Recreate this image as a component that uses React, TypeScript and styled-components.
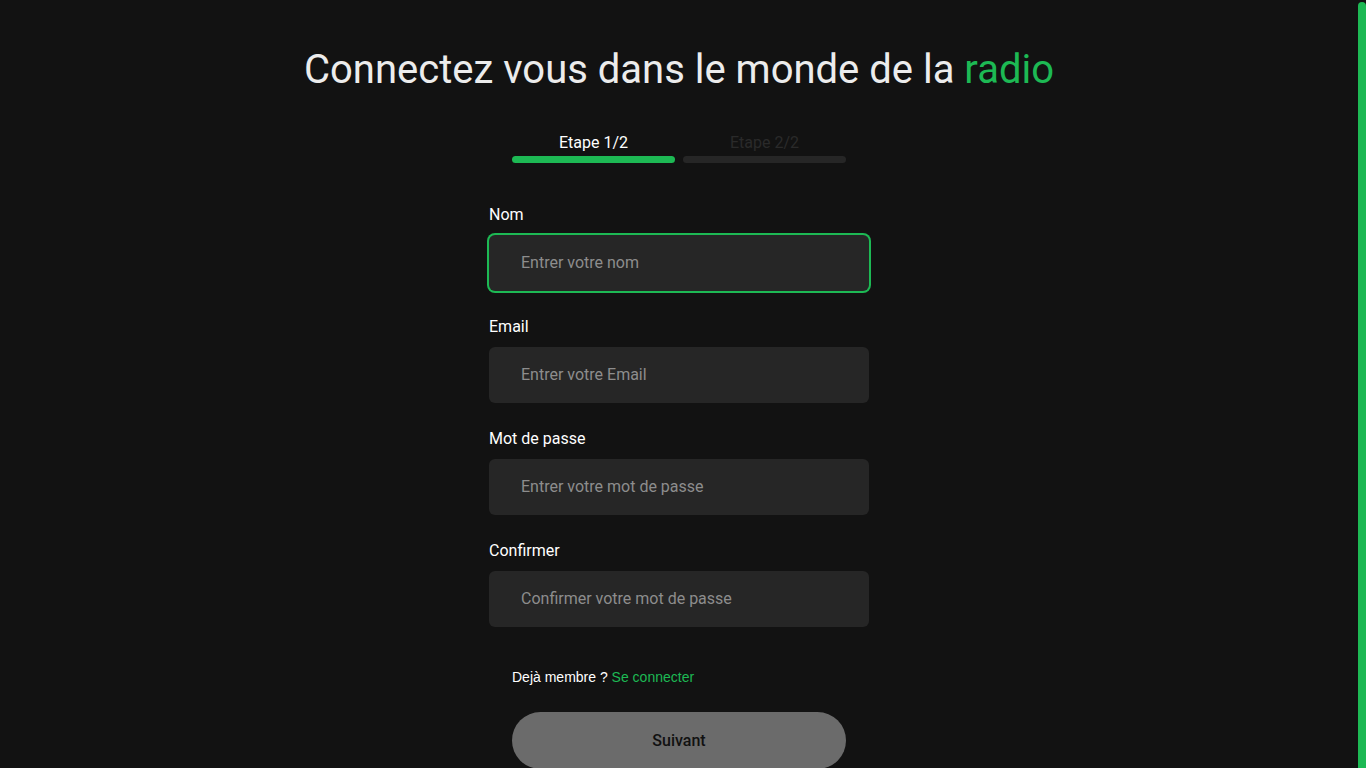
import React from "react";
import styled, { createGlobalStyle } from "styled-components";

const GREEN = "#1db954";

const Global = createGlobalStyle`
  html, body { margin: 0; padding: 0; background: #121212; }
  body { font-family: Roboto, "Noto Sans", sans-serif; color: #fff; }
  * { box-sizing: border-box; }
`;

const Page = styled.main`
  min-height: 100vh;
  display: flex;
  flex-direction: column;
  align-items: center;
  padding: 46px 8px 24px 0;
`;

const ScrollThumb = styled.div`
  position: fixed;
  top: 2px;
  right: 0;
  bottom: -6px;
  width: 8px;
  border-radius: 4px;
  background: ${GREEN};
`;

const Title = styled.h1`
  margin: 0;
  font-size: 40px;
  font-weight: 400;
  line-height: 48px;
  color: #ececec;
`;

const Accent = styled.span`
  color: ${GREEN};
`;

const Steps = styled.div`
  margin-top: 39px;
  width: 334px;
  display: grid;
  grid-template-columns: 1fr 1fr;
  column-gap: 8px;
`;

const Step = styled.div<{ $active?: boolean }>`
  display: flex;
  flex-direction: column;
  align-items: center;
  gap: 4px;
  font-size: 16px;
  line-height: 19px;
  color: ${(p) => (p.$active ? "#ffffff" : "#2a2a2a")};
`;

const Bar = styled.div<{ $active?: boolean }>`
  width: 100%;
  height: 7px;
  border-radius: 4px;
  background: ${(p) => (p.$active ? GREEN : "#262626")};
`;

const Form = styled.form`
  margin-top: 41px;
  width: 380px;
  display: flex;
  flex-direction: column;
  gap: 25px;
`;

const Field = styled.div`
  display: flex;
  flex-direction: column;
  gap: 9px;
`;

const Label = styled.label`
  font-size: 16px;
  font-weight: 400;
  line-height: 22px;
  color: #fff;
`;

const Input = styled.input<{ $focus?: boolean }>`
  height: 56px;
  width: 100%;
  border-radius: 6px;
  background: #262626;
  border: none;
  padding: 0 32px 1px;
  font-family: Roboto, sans-serif;
  font-size: 16px;
  color: #fff;
  caret-color: #8d8d8d;
  outline: none;
  box-shadow: ${(p) => (p.$focus ? `0 0 0 2px ${GREEN}` : "none")};
  &::placeholder { color: #8d8d8d; }
`;

const Bottom = styled.div`
  width: 334px;
  margin-top: 42px;
  display: flex;
  flex-direction: column;
  gap: 27px;
`;

const Member = styled.p`
  margin: 0;
  font-family: "Liberation Sans", Arial, sans-serif;
  font-size: 14px;
  line-height: 16px;
  color: #fff;
`;

const Link = styled.a`
  color: ${GREEN};
  text-decoration: none;
`;

const Button = styled.button`
  width: 100%;
  height: 57px;
  border: none;
  border-radius: 29px;
  background: #6b6b6b;
  color: #111;
  font-family: Roboto, sans-serif;
  font-size: 16px;
  font-weight: 500;
  padding-bottom: 1px;
`;

export default function App() {
  return (
    <>
      <Global />
      <Page>
        <Title>
          Connectez vous dans le monde de la <Accent>radio</Accent>
        </Title>
        <Steps>
          <Step $active>
            Etape 1/2
            <Bar $active />
          </Step>
          <Step>
            Etape 2/2
            <Bar />
          </Step>
        </Steps>
        <Form onSubmit={(e) => e.preventDefault()}>
          <Field>
            <Label htmlFor="nom">Nom</Label>
            <Input id="nom" $focus autoFocus placeholder="Entrer votre nom" />
          </Field>
          <Field>
            <Label htmlFor="email">Email</Label>
            <Input id="email" placeholder="Entrer votre Email" />
          </Field>
          <Field>
            <Label htmlFor="pw">Mot de passe</Label>
            <Input id="pw" type="password" placeholder="Entrer votre mot de passe" />
          </Field>
          <Field>
            <Label htmlFor="pw2">Confirmer</Label>
            <Input id="pw2" type="password" placeholder="Confirmer votre mot de passe" />
          </Field>
        </Form>
        <Bottom>
          <Member>
            Dejà membre ? <Link href="#">Se connecter</Link>
          </Member>
          <Button type="button">Suivant</Button>
        </Bottom>
      </Page>
      <ScrollThumb aria-hidden />
    </>
  );
}
